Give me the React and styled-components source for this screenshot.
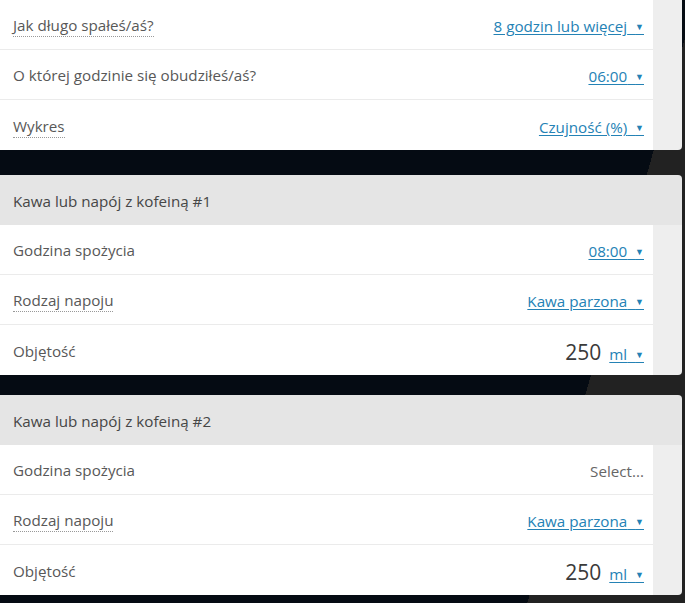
import React from 'react';
import styled, { createGlobalStyle } from 'styled-components';

const GlobalStyle = createGlobalStyle`
  html, body {
    margin: 0;
    padding: 0;
    height: 100%;
  }
  body {
    font-family: "Open Sans", "Noto Sans", sans-serif;
    background: linear-gradient(105.6deg, #050b13 670px, #222222 670px) fixed;
  }
`;

const Page = styled.div`
  width: 685px;
`;

const Card = styled.section`
  width: 682px;
  margin-bottom: ${(p) => p.$gap}px;
  border-radius: ${(p) => (p.$flatTop ? '0 0 4px 0' : '0 4px 4px 0')};
  overflow: hidden;
`;

const CardHeader = styled.div`
  height: 50px;
  box-sizing: border-box;
  display: flex;
  align-items: center;
  padding: 2px 0 0 13px;
  background: #e5e5e5;
  color: #464646;
  font-size: 15.2px;
`;

const CardBody = styled.div`
  display: flex;
`;

const Rows = styled.div`
  flex: 1;
  background: #fff;
`;

const Side = styled.div`
  width: 29px;
  background: #eeeeee;
`;

const Row = styled.div`
  height: 50px;
  box-sizing: border-box;
  display: flex;
  align-items: center;
  justify-content: space-between;
  padding: 3px 9px 0 13px;
  border-bottom: ${(p) => (p.$last ? 'none' : '1px solid #ebebeb')};
`;

const Label = styled.span`
  color: #585858;
  font-size: 15.2px;
  padding-bottom: 1px;
  border-bottom: ${(p) => (p.$hint ? '1px dotted #999' : '1px solid transparent')};
`;

const Value = styled.span`
  display: flex;
  align-items: baseline;
  gap: 8px;
`;

const Link = styled.a`
  color: #2482b5;
  font-size: 15.2px;
  text-decoration: underline;
  text-underline-offset: 2px;
  cursor: pointer;
  white-space: pre;
`;

const Caret = styled.span`
  font-size: 9px;
  position: relative;
  top: -2px;
`;

const Amount = styled.span`
  color: #3a3a3a;
  font-size: 21px;
`;

const Placeholder = styled.span`
  color: #666;
  font-size: 15.2px;
`;

const Dropdown = ({ children }) => (
  <Link>
    {children}  <Caret>▼</Caret>
  </Link>
);

const drinkRows = (time) => [
  {
    label: 'Godzina spożycia',
    value: time ? <Dropdown>{time}</Dropdown> : <Placeholder>Select...</Placeholder>,
  },
  { label: 'Rodzaj napoju', hint: true, value: <Dropdown>Kawa parzona</Dropdown> },
  {
    label: 'Objętość',
    value: (
      <Value>
        <Amount>250</Amount>
        <Dropdown>ml</Dropdown>
      </Value>
    ),
  },
];

const sleepRows = [
  { label: 'Jak długo spałeś/aś?', hint: true, value: <Dropdown>8 godzin lub więcej</Dropdown> },
  { label: 'O której godzinie się obudziłeś/aś?', value: <Dropdown>06:00</Dropdown> },
  { label: 'Wykres', hint: true, value: <Dropdown>Czujność (%)</Dropdown> },
];

const Section = ({ title, rows, gap, flatTop }) => (
  <Card $gap={gap} $flatTop={flatTop}>
    {title && <CardHeader>{title}</CardHeader>}
    <CardBody>
      <Rows>
        {rows.map((r, i) => (
          <Row key={r.label} $last={i === rows.length - 1}>
            <Label $hint={r.hint}>{r.label}</Label>
            {r.value}
          </Row>
        ))}
      </Rows>
      <Side />
    </CardBody>
  </Card>
);

export default function App() {
  return (
    <>
      <GlobalStyle />
      <Page>
        <Section rows={sleepRows} gap={25} flatTop />
        <Section title="Kawa lub napój z kofeiną #1" rows={drinkRows('08:00')} gap={20} />
        <Section title="Kawa lub napój z kofeiną #2" rows={drinkRows(null)} gap={0} />
      </Page>
    </>
  );
}
